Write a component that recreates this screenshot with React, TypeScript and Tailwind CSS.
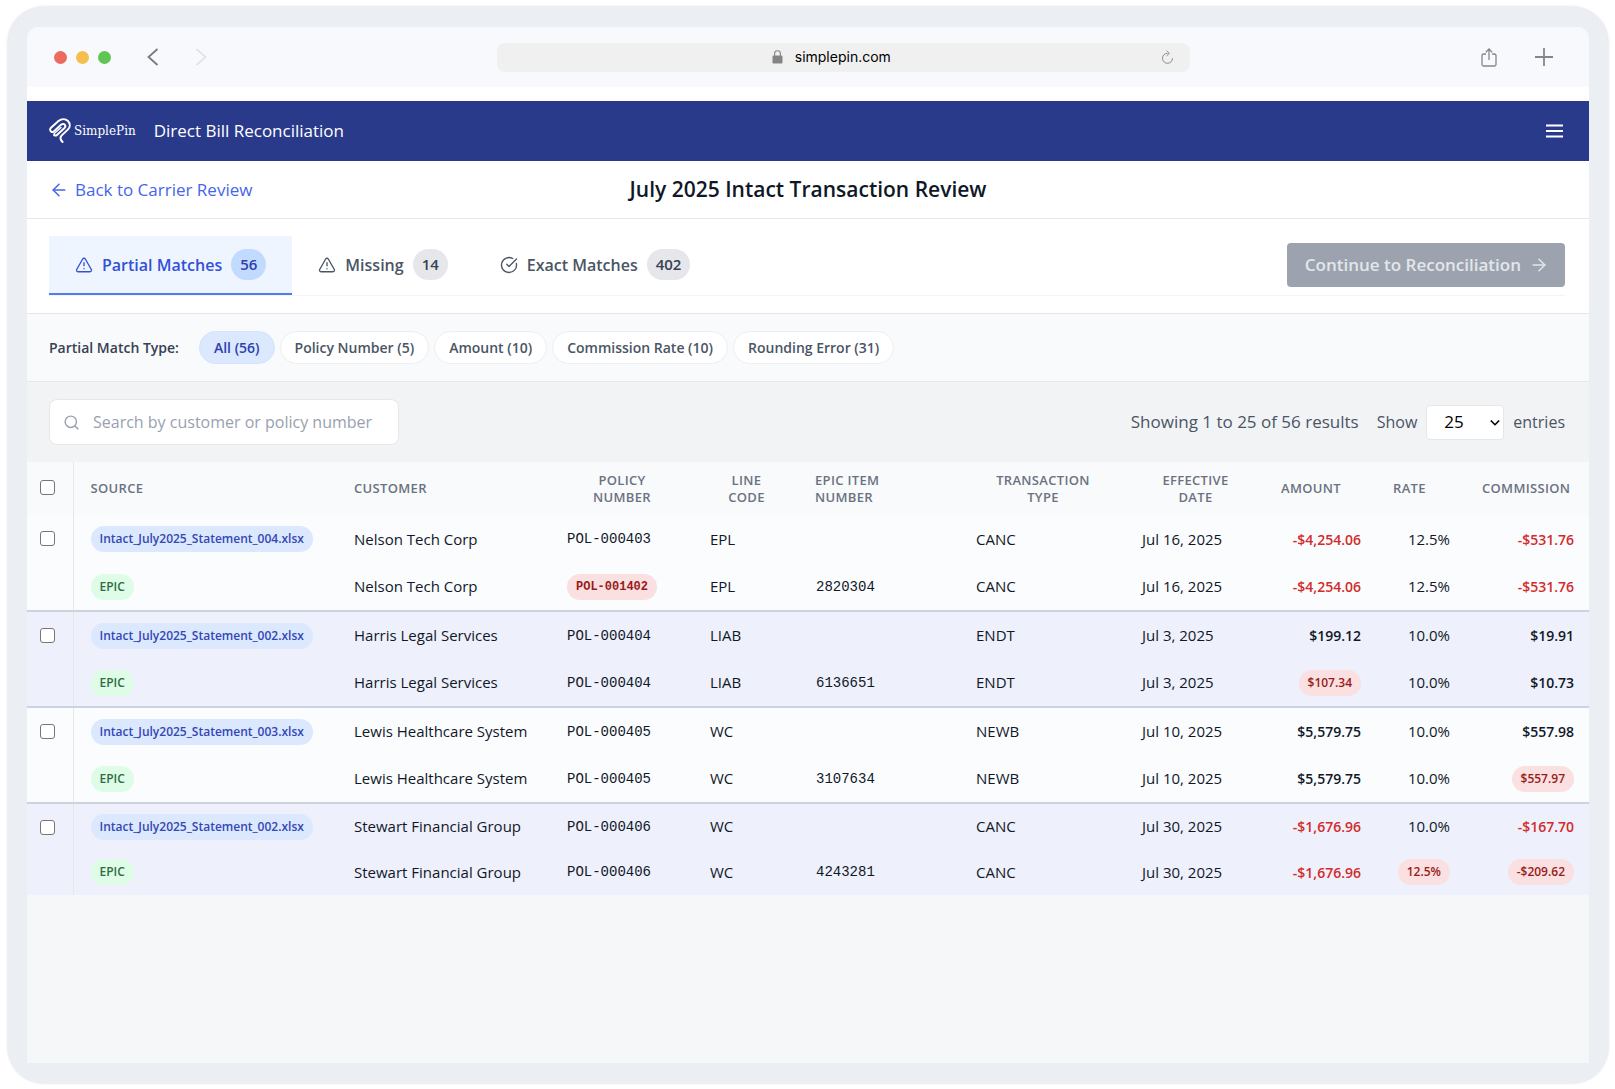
import { useState } from 'react'
import { AlertTriangle, ArrowLeft, ArrowRight, CircleCheckBig, Search } from 'lucide-react'

interface Line {
  source: string
  customer: string
  policy: string
  lineCode: string
  epicItem?: string
  type: string
  date: string
  amount: string
  rate: string
  commission: string
  flagged?: string[]
}

interface Match {
  id: string
  carrier: Line
  epic: Line
}

const matches: Match[] = [
  {
    id: '403',
    carrier: { source: 'Intact_July2025_Statement_004.xlsx', customer: 'Nelson Tech Corp', policy: 'POL-000403', lineCode: 'EPL', type: 'CANC', date: 'Jul 16, 2025', amount: '-$4,254.06', rate: '12.5%', commission: '-$531.76' },
    epic: { source: 'EPIC', customer: 'Nelson Tech Corp', policy: 'POL-001402', lineCode: 'EPL', epicItem: '2820304', type: 'CANC', date: 'Jul 16, 2025', amount: '-$4,254.06', rate: '12.5%', commission: '-$531.76', flagged: ['policy'] },
  },
  {
    id: '404',
    carrier: { source: 'Intact_July2025_Statement_002.xlsx', customer: 'Harris Legal Services', policy: 'POL-000404', lineCode: 'LIAB', type: 'ENDT', date: 'Jul 3, 2025', amount: '$199.12', rate: '10.0%', commission: '$19.91' },
    epic: { source: 'EPIC', customer: 'Harris Legal Services', policy: 'POL-000404', lineCode: 'LIAB', epicItem: '6136651', type: 'ENDT', date: 'Jul 3, 2025', amount: '$107.34', rate: '10.0%', commission: '$10.73', flagged: ['amount'] },
  },
  {
    id: '405',
    carrier: { source: 'Intact_July2025_Statement_003.xlsx', customer: 'Lewis Healthcare System', policy: 'POL-000405', lineCode: 'WC', type: 'NEWB', date: 'Jul 10, 2025', amount: '$5,579.75', rate: '10.0%', commission: '$557.98' },
    epic: { source: 'EPIC', customer: 'Lewis Healthcare System', policy: 'POL-000405', lineCode: 'WC', epicItem: '3107634', type: 'NEWB', date: 'Jul 10, 2025', amount: '$5,579.75', rate: '10.0%', commission: '$557.97', flagged: ['commission'] },
  },
  {
    id: '406',
    carrier: { source: 'Intact_July2025_Statement_002.xlsx', customer: 'Stewart Financial Group', policy: 'POL-000406', lineCode: 'WC', type: 'CANC', date: 'Jul 30, 2025', amount: '-$1,676.96', rate: '10.0%', commission: '-$167.70' },
    epic: { source: 'EPIC', customer: 'Stewart Financial Group', policy: 'POL-000406', lineCode: 'WC', epicItem: '4243281', type: 'CANC', date: 'Jul 30, 2025', amount: '-$1,676.96', rate: '12.5%', commission: '-$209.62', flagged: ['rate', 'commission'] },
  },
]

const tabs = [
  { id: 'partial', label: 'Partial Matches', count: 56, icon: AlertTriangle },
  { id: 'missing', label: 'Missing', count: 14, icon: AlertTriangle },
  { id: 'exact', label: 'Exact Matches', count: 402, icon: CircleCheckBig },
]

const matchTypes = ['All (56)', 'Policy Number (5)', 'Amount (10)', 'Commission Rate (10)', 'Rounding Error (31)']

function BrowserBar() {
  return (
    <div className="flex h-[60px] items-center bg-[#f8f9fd] pl-[27px] pr-9">
      <div className="flex flex-[11] items-center">
        <div className="flex gap-[9px]">
          <span className="h-[13px] w-[13px] rounded-full bg-[#ed6a5e]" />
          <span className="h-[13px] w-[13px] rounded-full bg-[#f5bf4f]" />
          <span className="h-[13px] w-[13px] rounded-full bg-[#61c554]" />
        </div>
        <button type="button" aria-label="Go back" className="ml-9 text-[#7b7b7f]">
          <svg width="12" height="18" viewBox="0 0 12 18" fill="none" stroke="currentColor" strokeWidth="1.8">
            <path d="M10.5 1 1.5 9l9 8" />
          </svg>
        </button>
        <button type="button" aria-label="Go forward" className="ml-9 text-[#dcdde1]">
          <svg width="12" height="18" viewBox="0 0 12 18" fill="none" stroke="currentColor" strokeWidth="1.4">
            <path d="m1.5 1 9 8-9 8" />
          </svg>
        </button>
      </div>
      <div className="flex h-[29px] w-[693px] items-center rounded-lg bg-[#f0f0f0] px-4">
        <div className="flex flex-1 items-center justify-center gap-3 pr-3 font-[Inter,sans-serif] text-sm text-black">
          <svg width="11" height="14" viewBox="0 0 11 14" fill="none">
            <rect x="0.5" y="5.5" width="10" height="8" rx="1.2" fill="#848484" />
            <path d="M2.6 6V3.7a2.9 2.9 0 0 1 5.8 0V6" stroke="#848484" strokeWidth="1.1" />
          </svg>
          simplepin.com
        </div>
        <button type="button" aria-label="Reload" className="text-[#8a8a8a]">
          <svg width="13" height="15" viewBox="0 0 13 15" fill="none" stroke="currentColor" strokeWidth="1">
            <path d="M6.5 3.3a5 5 0 1 0 5 5" />
            <path d="m5.6.8 2.7 2.6-2.7 2.5" />
          </svg>
        </button>
      </div>
      <div className="flex flex-[9] items-center justify-end gap-[38px] text-[#85868a]">
        <button type="button" aria-label="Share">
          <svg width="16" height="19" viewBox="0 0 16 19" fill="none" stroke="currentColor" strokeWidth="1.3">
            <path d="M5 6H2.5A1.5 1.5 0 0 0 1 7.5v9A1.5 1.5 0 0 0 2.5 18h11a1.5 1.5 0 0 0 1.5-1.5v-9A1.5 1.5 0 0 0 13.5 6H11" />
            <path d="M8 12V1.2M4.8 4.2 8 1l3.2 3.2" />
          </svg>
        </button>
        <button type="button" aria-label="New tab">
          <svg width="18" height="18" viewBox="0 0 18 18" stroke="currentColor" strokeWidth="1.8">
            <path d="M9 0v18M0 9h18" />
          </svg>
        </button>
      </div>
    </div>
  )
}

function Logo() {
  return (
    <div className="flex items-center gap-[3px]">
      <svg width="22" height="26" viewBox="0 0 22 26" fill="none" stroke="white" strokeWidth="2" strokeLinecap="round" strokeLinejoin="round">
        <path d="M5.2 17c.6.7 1.8.9 2.8 0l7.5-7c1-1 1.2-2.2.3-3.3-.8-1-2.500-1.100-3.800 0L4.800 13.400c-.8.700-2 .8-2.800.1-1.200-1.200-1.100-2.700 0-3.700L9.500 3c3-2.500 7-2.400 9.500 0 2.500 2.800 2.300 6.200-.2 8.600l-6.300 6c-1.700 1.800-1.300 3.900 1.100 6.400" />
        <path d="m5.2 17c-.4-.6-.2-1.2.4-1.800L12 9.400" strokeWidth="1.4" />
      </svg>
      <span className="font-['DejaVu_Serif',serif] text-xs text-white">SimplePin</span>
    </div>
  )
}

function Flag({ children }: { children: string }) {
  return (
    <span className="inline-block rounded-full bg-[#fae0e0] px-[9px] py-1 text-xs leading-[18px] font-semibold text-[#991b1b]">
      {children}
    </span>
  )
}

function Money({ value, flagged }: { value: string; flagged?: boolean }) {
  if (flagged) return <Flag>{value}</Flag>
  return (
    <span className={`text-sm font-semibold ${value.startsWith('-') ? 'text-[#d32b2b]' : 'text-gray-900'}`}>
      {value}
    </span>
  )
}

function LineCells({ line }: { line: Line }) {
  const cell = 'pl-[17px] pr-[15px]'
  const mono = "pl-[18px] pr-[14px] font-['Liberation_Mono',monospace] text-sm"
  return (
    <>
      <td className={cell}>
        <span
          className={`inline-block rounded-full px-[9px] py-1 text-xs leading-[18px] font-semibold ${
            line.source === 'EPIC' ? 'bg-[#dffce6] text-[#2f6b45]' : 'bg-[#dbe8fe] text-[#3347b5]'
          }`}
        >
          {line.source}
        </span>
      </td>
      <td className={cell}>{line.customer}</td>
      <td className={mono}>
        {line.flagged?.includes('policy') ? <Flag>{line.policy}</Flag> : line.policy}
      </td>
      <td className={cell}>{line.lineCode}</td>
      <td className={mono}>{line.epicItem}</td>
      <td className={cell}>{line.type}</td>
      <td className={cell}>{line.date}</td>
      <td className={`${cell} text-right`}>
        <Money value={line.amount} flagged={line.flagged?.includes('amount')} />
      </td>
      <td className={`${cell} text-right`}>
        {line.flagged?.includes('rate') ? <Flag>{line.rate}</Flag> : line.rate}
      </td>
      <td className={`${cell} text-right`}>
        <Money value={line.commission} flagged={line.flagged?.includes('commission')} />
      </td>
    </>
  )
}

export default function App() {
  const [tab, setTab] = useState('partial')
  const [matchType, setMatchType] = useState('All (56)')
  const [search, setSearch] = useState('')
  const [selected, setSelected] = useState<string[]>([])

  const visible = matches.filter((m) =>
    `${m.carrier.customer} ${m.carrier.policy} ${m.epic.policy}`.toLowerCase().includes(search.toLowerCase())
  )

  const toggle = (id: string) =>
    setSelected(selected.includes(id) ? selected.filter((s) => s !== id) : [...selected, id])

  const checkbox = 'block h-[15px] w-[15px] appearance-none rounded-[3px] border border-[#767676] bg-white checked:bg-blue-600'
  const th = 'pl-[17px] pr-[15px] font-semibold'

  return (
    <div className="flex min-h-screen bg-white px-2 pt-[7px] pb-[6px] font-['Open_Sans','Noto_Sans',sans-serif]">
      <div className="flex flex-1 flex-col rounded-[36px] bg-[#ebeff4] px-[19px] py-5 shadow-[0_0_3px_rgba(0,0,0,0.18)]">
        <div className="flex flex-1 flex-col overflow-hidden rounded-t-xl bg-[#f5f7f9]">
          <BrowserBar />

          {/* App header */}
          <header className="flex h-[74px] items-center justify-between border-t-[14px] border-white bg-[#293a8a] pl-[22px] pr-[26px] text-white">
            <div className="flex items-center gap-[18px]">
              <Logo />
              <span className="text-[17px]">Direct Bill Reconciliation</span>
            </div>
            <button type="button" aria-label="Menu">
              <svg width="17" height="14" viewBox="0 0 17 14" stroke="white" strokeWidth="1.8">
                <path d="M0 1.5h17M0 7h17M0 12.5h17" />
              </svg>
            </button>
          </header>

          {/* Title */}
          <div className="grid h-[58px] grid-cols-[1fr_auto_1fr] items-center border-b border-gray-200 bg-white px-[22px]">
            <a href="#carrier-review" className="flex items-center gap-[6px] text-[17px] text-[#4565ea]">
              <ArrowLeft className="h-5 w-5" strokeWidth={1.8} />
              Back to Carrier Review
            </a>
            <h1 className="text-[21px] font-semibold text-gray-900">July 2025 Intact Transaction Review</h1>
          </div>

          {/* Tabs */}
          <div className="border-b border-gray-200 bg-white py-[17px] pl-[22px] pr-6">
            <div className="flex h-[60px] items-start justify-between border-b border-gray-100">
              <div className="flex" role="tablist">
                {tabs.map(({ id, label, count, icon: Icon }) => (
                  <button
                    key={id}
                    type="button"
                    role="tab"
                    aria-selected={tab === id}
                    onClick={() => setTab(id)}
                    className={`flex h-[59px] items-center gap-[9px] border-b-2 px-[26px] text-base font-semibold ${
                      tab === id ? 'border-[#4f7df0] bg-[#eef5ff] text-[#3450d8]' : 'border-transparent text-gray-600'
                    }`}
                  >
                    <Icon className="h-[18px] w-[18px]" strokeWidth={1.8} />
                    {label}
                    <span
                      className={`rounded-full px-[9px] text-[15px] leading-[31px] ${
                        tab === id ? 'bg-[#c3daff] text-[#2b3fae]' : 'bg-gray-200 text-gray-700'
                      }`}
                    >
                      {count}
                    </span>
                  </button>
                ))}
              </div>
              <button
                type="button"
                disabled
                className="mt-[7px] flex h-11 items-center gap-2 rounded bg-[#9ca3af] pl-[18px] pr-4 text-[17px] font-semibold text-[#e3e6ea]"
              >
                Continue to Reconciliation
                <ArrowRight className="h-5 w-5" strokeWidth={1.8} />
              </button>
            </div>
          </div>

          {/* Match type filter */}
          <div className="flex h-[68px] items-center border-b border-gray-200 bg-[#f9fafc] px-[22px] text-sm font-semibold">
            <span className="mr-5 text-gray-700">Partial Match Type:</span>
            <div className="flex gap-[5px]">
              {matchTypes.map((type) => (
                <button
                  key={type}
                  type="button"
                  onClick={() => setMatchType(type)}
                  className={`h-[33px] rounded-full border px-[14px] ${
                    matchType === type ? 'border-[#d3e3fd] bg-[#dbe8fe] text-[#2b3fae]' : 'border-[#eceef1] bg-white text-gray-600'
                  }`}
                >
                  {type}
                </button>
              ))}
            </div>
          </div>

          {/* Search and page size */}
          <div className="flex h-20 items-center justify-between bg-[#f2f3f5] pl-[22px] pr-6 text-gray-600">
            <label className="flex h-[46px] w-[350px] items-center gap-[13px] rounded-lg border border-gray-200 bg-white px-[13px] text-base">
              <Search className="h-[17px] w-[17px] shrink-0 text-gray-400" strokeWidth={2} />
              <input
                type="text"
                aria-label="Search by customer or policy number"
                placeholder="Search by customer or policy number"
                value={search}
                onChange={(e) => setSearch(e.target.value)}
                className="min-w-0 flex-1 text-gray-900 outline-none placeholder:text-gray-400"
              />
            </label>
            <div className="flex items-center text-base">
              <span className="mr-[18px] text-[17px]">Showing 1 to 25 of 56 results</span>
              <label className="flex items-center gap-[9px]">
                Show
                <span className="relative">
                  <select defaultValue="25" className="h-[35px] w-[78px] appearance-none rounded border border-gray-200 bg-white pl-[17px] text-[17px] text-black">
                    <option>25</option>
                    <option>50</option>
                    <option>100</option>
                  </select>
                  <svg className="pointer-events-none absolute top-[14px] right-1" width="10" height="8" viewBox="0 0 10 8" fill="none" stroke="black" strokeWidth="1.6">
                    <path d="m.8 1.5 4.2 4.2 4.2-4.2" />
                  </svg>
                </span>
                entries
              </label>
            </div>
          </div>

          {/* Transactions */}
          <table className="w-full table-fixed border-collapse text-left text-[15px] text-gray-900">
            <colgroup>
              <col className="w-[46px]" />
              <col className="w-[264px]" />
              <col className="w-[212px]" />
              <col className="w-[144px]" />
              <col className="w-[105px]" />
              <col className="w-[161px]" />
              <col className="w-[166px]" />
              <col className="w-[139px]" />
              <col className="w-[112px]" />
              <col className="w-[89px]" />
              <col className="w-[124px]" />
            </colgroup>
            <thead className="bg-[#f9fafb] text-[13px] leading-[17px] tracking-wide text-gray-500 uppercase">
              <tr className="h-[53px]">
                <th className="border-r border-gray-200 pb-[3px] pl-[13px]">
                  <input
                    type="checkbox"
                    aria-label="Select all"
                    className={checkbox}
                    checked={selected.length === matches.length}
                    onChange={() => setSelected(selected.length === matches.length ? [] : matches.map((m) => m.id))}
                  />
                </th>
                <th className={th}>Source</th>
                <th className={th}>Customer</th>
                <th className={`${th} text-center`}>Policy<br />Number</th>
                <th className={`${th} text-center`}>Line<br />Code</th>
                <th className={th}>Epic Item<br />Number</th>
                <th className={`${th} text-center`}>Transaction<br />Type</th>
                <th className={`${th} text-center`}>Effective<br />Date</th>
                <th className={th}>Amount</th>
                <th className={th}>Rate</th>
                <th className={th}>Commission</th>
              </tr>
            </thead>
            {visible.map((m) => (
              <tbody
                key={m.id}
                className="border-b-2 border-[#cbd3e1] bg-[#fbfcfe] last:border-b-0 even:bg-[#eef0fb] [&>tr]:h-12 last:[&>tr]:h-[46px]"
              >
                <tr>
                  <td rowSpan={2} className="border-r border-gray-200 pt-4 pl-[13px] align-top">
                    <input
                      type="checkbox"
                      aria-label={`Select ${m.carrier.policy}`}
                      className={checkbox}
                      checked={selected.includes(m.id)}
                      onChange={() => toggle(m.id)}
                    />
                  </td>
                  <LineCells line={m.carrier} />
                </tr>
                <tr>
                  <LineCells line={m.epic} />
                </tr>
              </tbody>
            ))}
          </table>
        </div>
      </div>
    </div>
  )
}
